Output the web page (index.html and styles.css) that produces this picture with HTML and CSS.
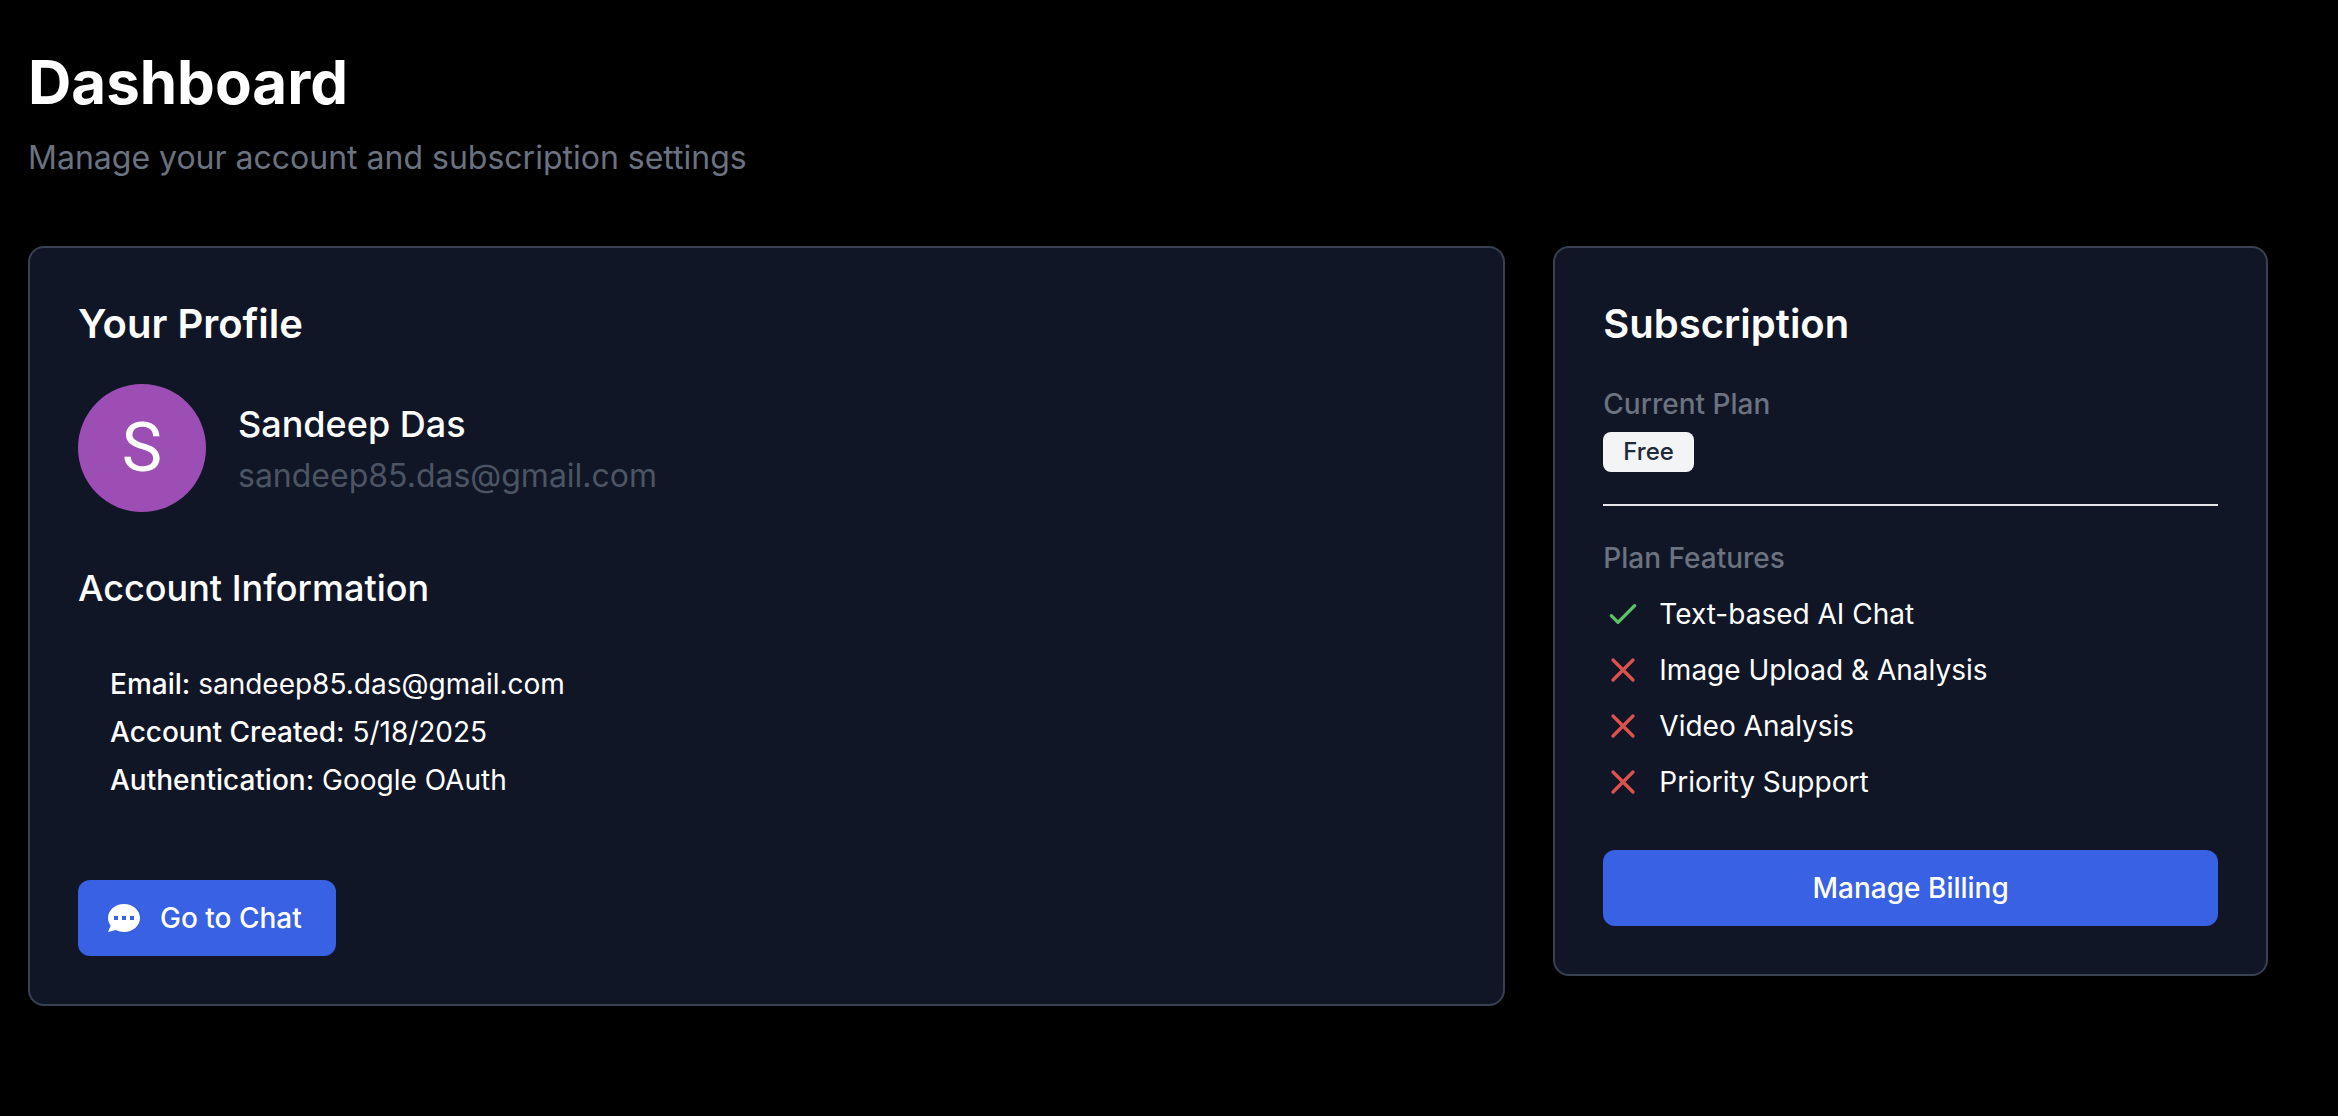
FILE: index.html
```html
<!DOCTYPE html>
<html lang="en">
<head>
    <meta charset="UTF-8">
    <meta name="viewport" content="width=device-width, initial-scale=1.0">
    <title>Dashboard</title>
    <link rel="stylesheet" href="styles.css">
</head>
<body>
    <main class="page">
        <header class="page-header">
            <h1>Dashboard</h1>
            <p>Manage your account and subscription settings</p>
        </header>

        <div class="grid">
            <section class="card">
                <h2>Your Profile</h2>
                <div class="profile">
                    <div class="avatar">S</div>
                    <div>
                        <h3>Sandeep Das</h3>
                        <p class="profile-email">sandeep85.das@gmail.com</p>
                    </div>
                </div>

                <h3>Account Information</h3>
                <div class="account-info">
                    <p><strong>Email:</strong> sandeep85.das@gmail.com</p>
                    <p><strong>Account Created:</strong> 5/18/2025</p>
                    <p><strong>Authentication:</strong> Google OAuth</p>
                </div>

                <a href="#chat" class="btn">
                    <svg class="btn-icon" viewBox="0 0 20 20" fill="currentColor" aria-hidden="true">
                        <path fill-rule="evenodd" clip-rule="evenodd" d="M18 10c0 3.866-3.582 7-8 7a8.841 8.841 0 01-4.083-.98L2 17l1.338-3.123C2.493 12.767 2 11.434 2 10c0-3.866 3.582-7 8-7s8 3.134 8 7zM7 9H5v2h2V9zm8 0h-2v2h2V9zM9 9h2v2H9V9z"/>
                    </svg>
                    Go to Chat
                </a>
            </section>

            <section class="card">
                <h2>Subscription</h2>
                <div class="plan">
                    <p class="label">Current Plan</p>
                    <span class="badge">Free</span>
                </div>

                <div class="features">
                    <p class="label">Plan Features</p>
                    <ul>
                        <li>
                            <svg class="icon icon-yes" viewBox="0 0 24 24" aria-hidden="true"><path d="M5 13l4 4L19 7"/></svg>
                            Text-based AI Chat
                        </li>
                        <li>
                            <svg class="icon icon-no" viewBox="0 0 24 24" aria-hidden="true"><path d="M6 18L18 6M6 6l12 12"/></svg>
                            Image Upload &amp; Analysis
                        </li>
                        <li>
                            <svg class="icon icon-no" viewBox="0 0 24 24" aria-hidden="true"><path d="M6 18L18 6M6 6l12 12"/></svg>
                            Video Analysis
                        </li>
                        <li>
                            <svg class="icon icon-no" viewBox="0 0 24 24" aria-hidden="true"><path d="M6 18L18 6M6 6l12 12"/></svg>
                            Priority Support
                        </li>
                    </ul>
                </div>

                <button type="button" class="btn btn-full">Manage Billing</button>
            </section>
        </div>
    </main>
</body>
</html>
```

FILE: styles.css
```css
* {
    box-sizing: border-box;
    margin: 0;
    padding: 0;
}

body {
    background: #000;
    color: #fff;
    font-family: Inter, sans-serif;
    font-size: 28px;
    line-height: 40px;
    min-height: 100vh;
    -webkit-font-smoothing: antialiased;
}

.page {
    padding: 46px 70px 64px 28px;
}

.page-header {
    margin-bottom: 64px;
}

h1 {
    font-size: 60px;
    line-height: 72px;
    font-weight: 700;
    margin-bottom: 16px;
}

.page-header p {
    color: #6b7280;
    font-size: 32px;
    line-height: 48px;
}

/* profile takes two thirds, subscription one */
.grid {
    display: grid;
    grid-template-columns: repeat(3, 1fr);
    gap: 48px;
    align-items: start;
}

.card {
    background: #111627;
    border: 2px solid #374151;
    border-radius: 16px;
    padding: 48px;
}

.card:first-child {
    grid-column: span 2;
}

h2 {
    font-size: 40px;
    line-height: 56px;
    font-weight: 600;
    margin-bottom: 32px;
}

h3 {
    font-size: 36px;
    line-height: 56px;
    font-weight: 500;
}

.profile {
    display: flex;
    align-items: center;
    gap: 32px;
    margin-bottom: 48px;
}

.avatar {
    width: 128px;
    height: 128px;
    border-radius: 50%;
    background: #9d4eb5;
    font-family: Roboto, sans-serif;
    font-size: 68px;
    line-height: 128px;
    text-align: center;
}

.profile-email {
    color: #4b5563;
    font-size: 32px;
    line-height: 48px;
}

.account-info {
    display: flex;
    flex-direction: column;
    gap: 8px;
    margin-top: 16px;
    margin-bottom: 48px;
    padding: 32px;
}

.account-info strong {
    font-weight: 500;
}

.btn {
    display: inline-flex;
    align-items: center;
    justify-content: center;
    vertical-align: top;
    padding: 16px 32px;
    border: 2px solid transparent;
    border-radius: 12px;
    background: #3861e4;
    background-clip: border-box;
    color: #fff;
    font: inherit;
    font-weight: 500;
    text-decoration: none;
    cursor: pointer;
}

.btn:hover {
    background: #2f50c9;
}

.btn-icon {
    width: 40px;
    height: 40px;
    margin-left: -8px;
    margin-right: 16px;
}

.btn-full {
    display: flex;
    width: 100%;
}

.label {
    color: #6b7280;
    font-weight: 500;
}

.plan {
    padding-bottom: 32px;
    border-bottom: 2px solid #e5e7eb;
}

.badge {
    display: block;
    width: fit-content;
    margin-top: 8px;
    padding: 4px 20px;
    border-radius: 8px;
    background: #f3f4f6;
    color: #1f2937;
    font-size: 24px;
    line-height: 32px;
    font-weight: 500;
}

.features {
    padding: 32px 0 48px;
}

.features ul {
    display: flex;
    flex-direction: column;
    gap: 16px;
    margin-top: 16px;
    list-style: none;
}

.features li {
    display: flex;
    align-items: center;
    gap: 16px;
}

.icon {
    width: 40px;
    height: 40px;
    fill: none;
    stroke: currentColor;
    stroke-width: 2;
    stroke-linecap: round;
    stroke-linejoin: round;
}

.icon-yes {
    color: #5bc467;
}

.icon-no {
    color: #de524c;
}
```
